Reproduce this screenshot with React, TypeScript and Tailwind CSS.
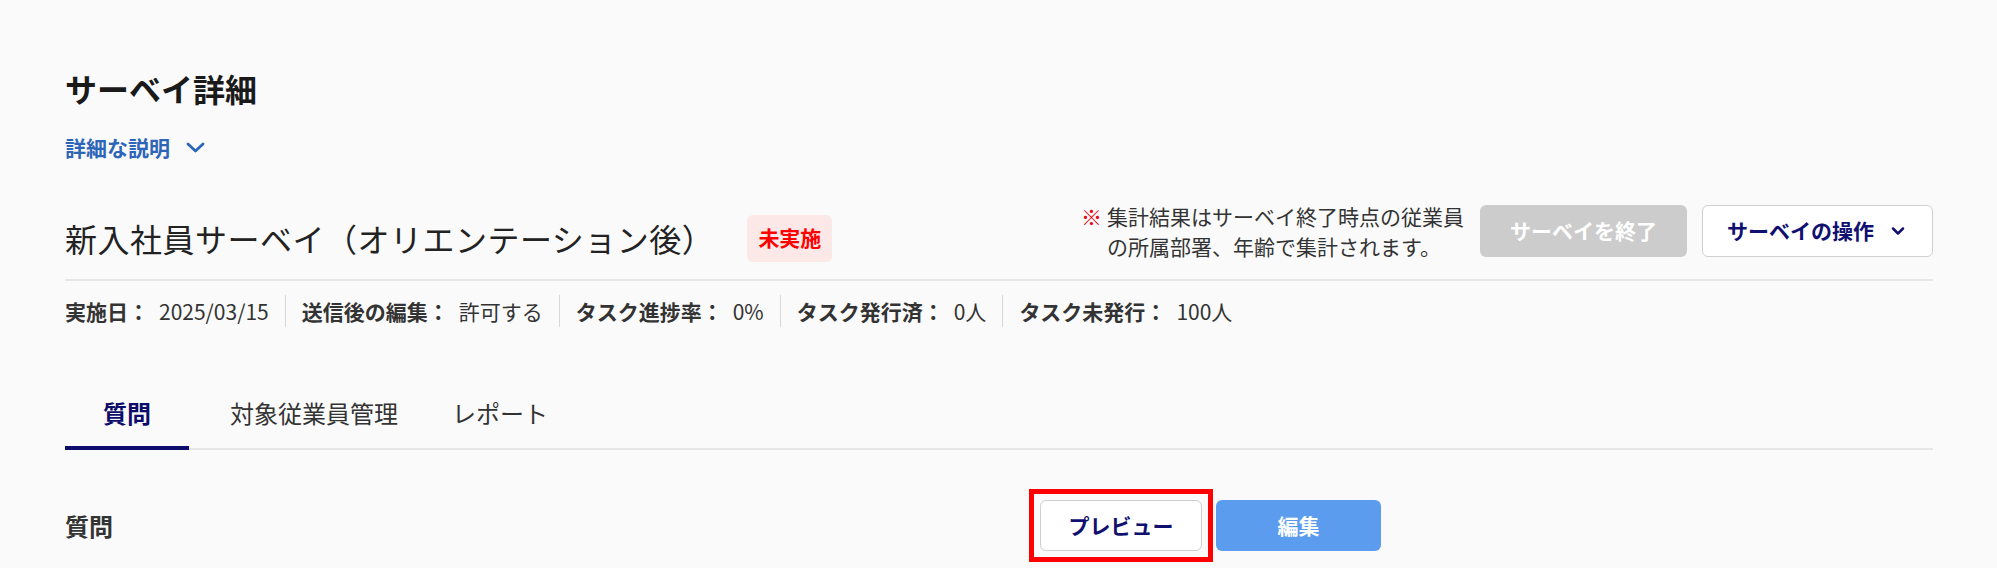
import { ChevronDown } from 'lucide-react'

const meta = [
  { label: '実施日：', value: '2025/03/15' },
  { label: '送信後の編集：', value: '許可する' },
  { label: 'タスク進捗率：', value: '0%' },
  { label: 'タスク発行済：', value: '0人' },
  { label: 'タスク未発行：', value: '100人' },
]

export default function App() {
  return (
    <div className="min-h-screen bg-[#fafafa] pl-[65px] pr-[64px] pt-[64px] font-['Noto_Sans_CJK_JP','Noto_Sans',sans-serif] text-[#333]">
      {/* Page heading */}
      <h1 className="text-[32px] font-bold leading-[48px] text-[#1a1a1a]">サーベイ詳細</h1>
      <button className="mt-[19px] flex items-center gap-[16px] text-[21px] font-bold leading-[32px] text-[#2d66b9]">
        詳細な説明
        <svg width="19" height="11" viewBox="0 0 19 11" fill="none">
          <polyline points="2,2 9.5,9 17,2" stroke="currentColor" strokeWidth="2.8" strokeLinecap="round" strokeLinejoin="round" />
        </svg>
      </button>

      {/* Survey header */}
      <div className="mt-[38px] flex items-start justify-between border-b-2 border-[#e6e6e6] pb-[17px]">
        <div className="mt-[13px] flex items-center">
          <h2 className="text-[32px] leading-[48px] tracking-[0.5px] text-[#222]">新入社員サーベイ（オリエンテーション後）</h2>
          <span className="ml-[33px] flex h-[47px] items-center rounded-[6px] bg-[#fde8e8] px-[11px] text-[21px] font-bold text-[#ff0000]">
            未実施
          </span>
        </div>
        <div className="flex items-center">
          <div className="flex text-[21px] leading-[30px] text-[#333]">
            <span className="mr-[5px] text-[#e60012]">※</span>
            <p>
              集計結果はサーベイ終了時点の従業員
              <br />
              の所属部署、年齢で集計されます。
            </p>
          </div>
          <button className="ml-[16px] h-[52px] w-[207px] rounded-[6px] bg-[#cccccc] text-[21px] font-bold text-white">
            サーベイを終了
          </button>
          <button className="ml-[15px] flex h-[52px] w-[231px] items-center justify-center gap-[14px] rounded-[6px] border border-[#cfcfcf] bg-white text-[21px] font-bold text-[#101070]">
            サーベイの操作
            <ChevronDown className="h-[20px] w-[20px]" strokeWidth={3} />
          </button>
        </div>
      </div>

      {/* Meta row */}
      <div className="mt-[14px] flex text-[21px] leading-[32px]">
        {meta.map((m, i) => (
          <div
            key={m.label}
            className={i === 0 ? 'pr-[16px]' : 'border-l border-[#d9d9d9] px-[16px]'}
          >
            <span className="font-bold">{m.label}</span>
            <span className="ml-[10px]">{m.value}</span>
          </div>
        ))}
      </div>

      {/* Tabs */}
      <div className="mt-[68px] flex border-b-2 border-[#e6e6e6] text-[24px] leading-[36px]">
        <div className="-mb-[2px] w-[124px] border-b-4 border-[#0c0c6c] pb-[15px] text-center font-bold text-[#0c0c6c]">
          質問
        </div>
        <div className="ml-[41px] pb-[15px]">対象従業員管理</div>
        <div className="ml-[54px] pb-[15px]">レポート</div>
      </div>

      {/* Questions section */}
      <div className="mt-[50px] flex items-center">
        <div className="w-[975px] text-[24px] font-bold">質問</div>
        <div className="relative">
          <button className="h-[51px] w-[162px] rounded-[6px] border border-[#cfcfcf] bg-white text-[21px] font-bold text-[#101070]">
            プレビュー
          </button>
          <div className="pointer-events-none absolute -inset-[11px] border-[5px] border-[#ff0000]" />
        </div>
        <button className="ml-[14px] h-[51px] w-[165px] rounded-[6px] bg-[#5c9cef] text-[21px] font-bold text-white">
          編集
        </button>
      </div>
    </div>
  )
}
